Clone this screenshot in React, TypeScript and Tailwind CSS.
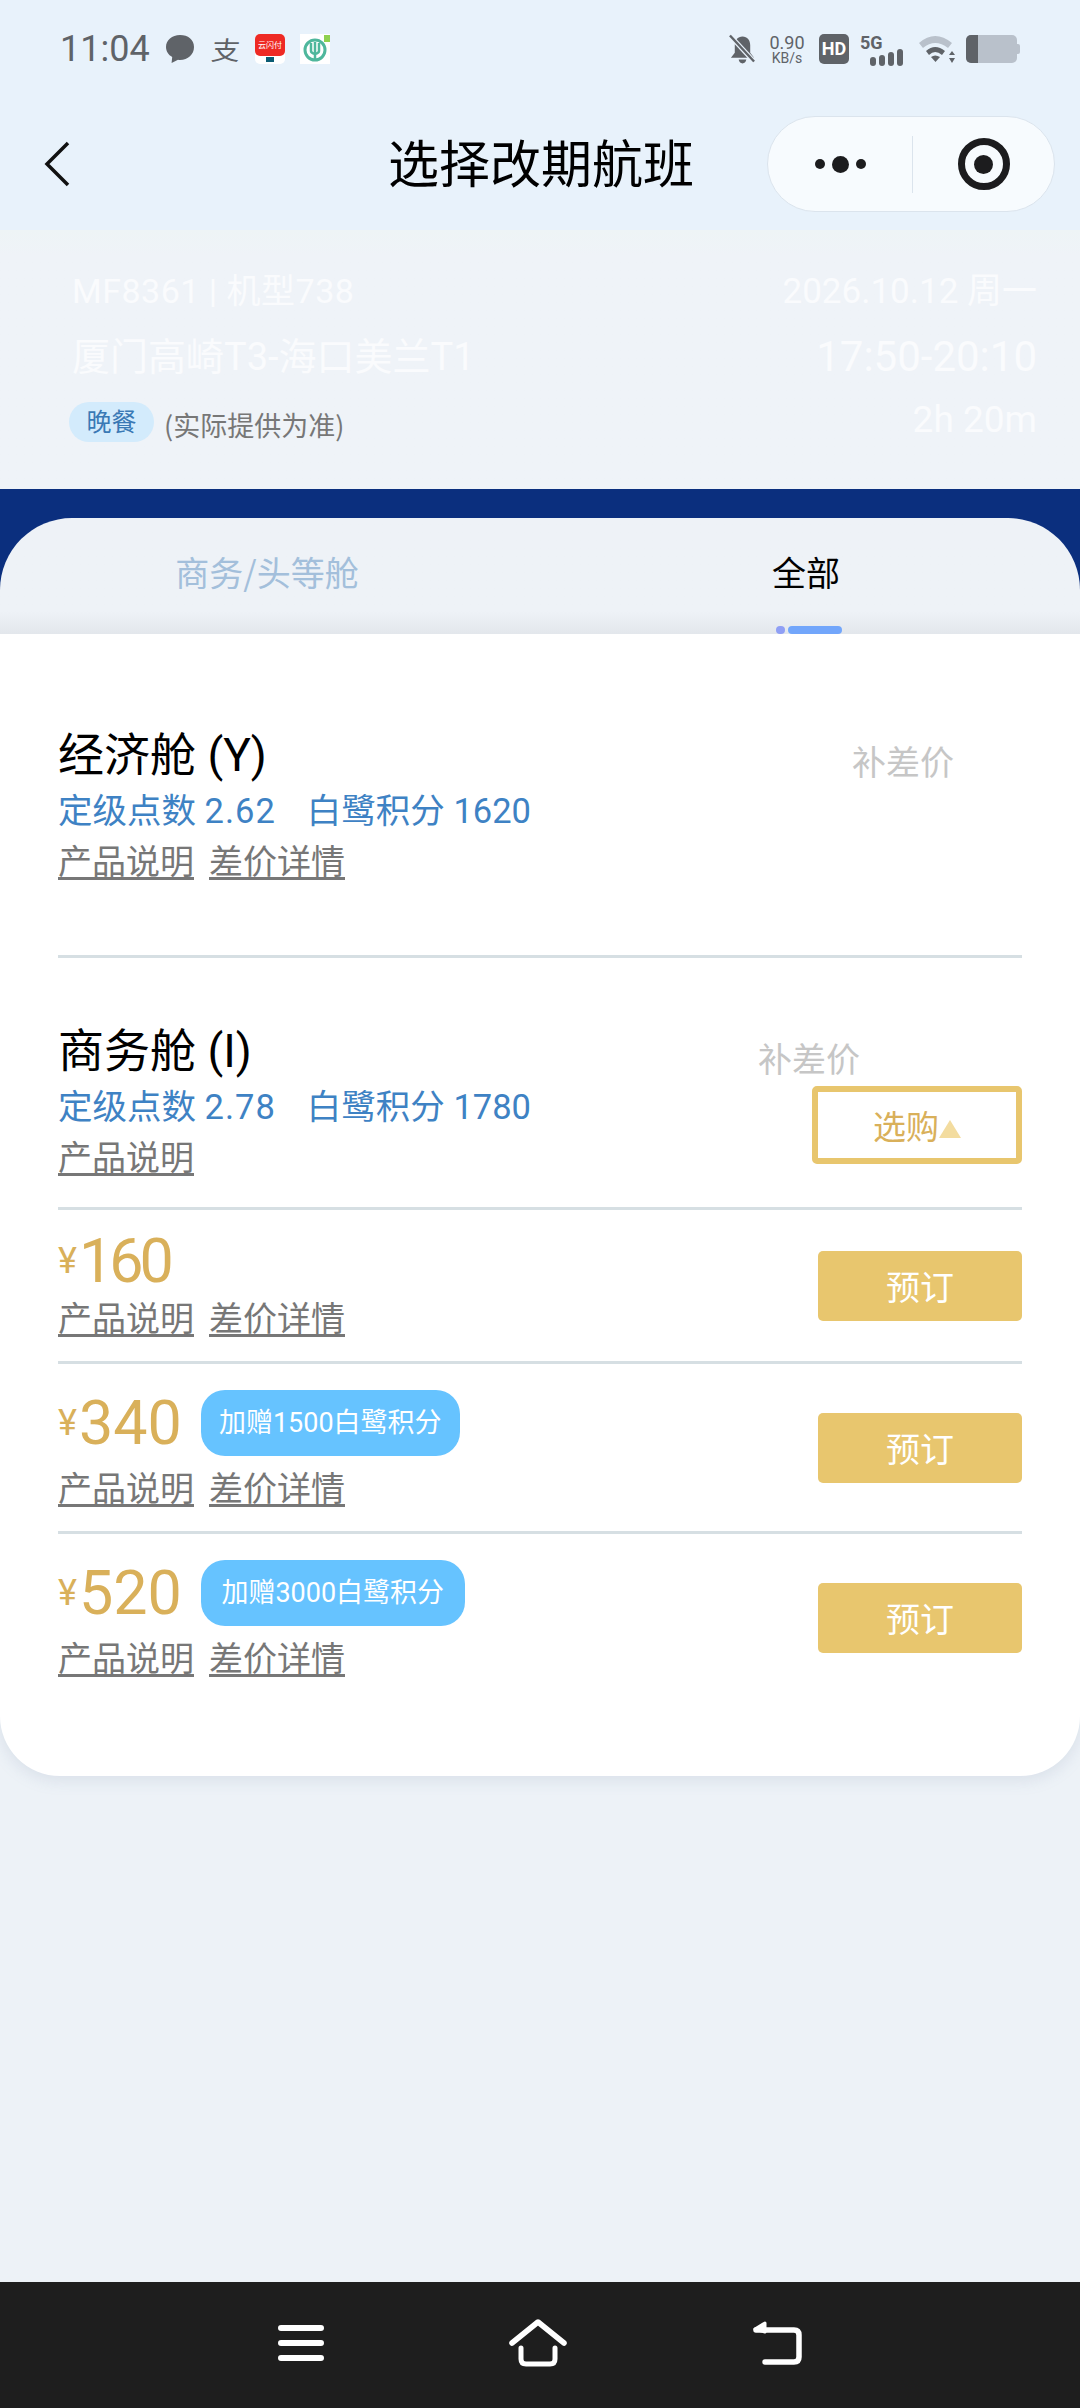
import React from "react";

const F = { fontFamily: '"Noto Sans CJK SC", sans-serif' };
const R = { fontFamily: 'Roboto, "Noto Sans CJK SC", sans-serif' };

function StatusLeft() {
  return (
    <div className="flex items-center">
      <span className="text-[36px] leading-none text-[#5f6368] w-[100px] ml-[60px]" style={R}>11:04</span>
      <svg width="30" height="30" viewBox="0 0 30 30" className="ml-[5px]">
        <path d="M15 1C7 1 1 6.200 1 13c0 4.400 2.400 7.800 6.200 10l-.6 6 6.400-3.200c.7.1 1.300.2 2 .2 8 0 14-5.600 14-13S23 1 15 1z" fill="#5f6368" />
      </svg>
      <span className="w-[28px] ml-[17px] text-[26px] leading-none text-[#5f6368] text-center scale-x-110 -skew-x-6" style={F}>支</span>
      <div className="ml-[15px] w-[30px] h-[30px] rounded-[5px] bg-white flex flex-col items-center">
        <div className="w-full h-[22px] bg-[#ee2a24] rounded-[5px] flex items-center justify-center text-[8px] leading-none text-white" style={F}>云闪付</div>
        <div className="w-[8px] h-[5px] mt-[1px] bg-[#0b5c74]" />
      </div>
      <svg width="30" height="30" viewBox="0 0 30 30" className="ml-[15px]">
        <rect width="30" height="30" fill="#fff" />
        <circle cx="15" cy="16" r="10" fill="none" stroke="#4fb79c" strokeWidth="3" />
        <path d="M11 9v8q0 2 4 3q4-1 4-3V9M15 8v18" fill="none" stroke="#4fb79c" strokeWidth="2.500" />
        <rect x="24" y="1" width="6" height="7" fill="#8fd14f" />
      </svg>
    </div>
  );
}

function StatusRight() {
  return (
    <div className="flex items-center">
      <svg width="27" height="30" viewBox="0 0 28 30">
        <path d="M14 2c5 0 8 4 8 9v8l4 5H2l4-5v-8c0-5 3-9 8-9zM10 26h8q-1 4-4 4t-4-4z" fill="#5f6368" />
        <path d="M0 0L26 28" stroke="#e8f2fb" strokeWidth="5" />
        <path d="M1 1L26 28" stroke="#5f6368" strokeWidth="2.500" />
      </svg>
      <div className="w-[38px] ml-[12px] flex flex-col items-center text-[#5f6368]" style={R}>
        <span className="text-[18px] leading-[17px]">0.90</span>
        <span className="text-[14px] leading-[14px]">KB/s</span>
      </div>
      <div className="ml-[13px] w-[30px] h-[30px] rounded-[5px] bg-[#5f6368] flex items-center justify-center text-[18px] font-bold leading-none text-white" style={R}>HD</div>
      <svg width="45" height="36" viewBox="0 0 45 36" className="ml-[11px]">
        <text x="0" y="18" fontSize="18" fontWeight="700" fill="#5f6368" fontFamily="Roboto, sans-serif">5G</text>
        <rect x="10" y="26" width="6" height="9" rx="3" fill="#5f6368" />
        <rect x="19" y="24" width="6" height="11" rx="3" fill="#5f6368" />
        <rect x="28" y="21" width="6" height="14" rx="3" fill="#5f6368" />
        <rect x="37" y="18" width="6" height="17" rx="3" fill="#5f6368" />
      </svg>
      <svg width="38" height="30" viewBox="0 0 38 30" className="ml-[13px]">
        <path d="M1 9Q17 -5 34 9l-4 5Q17 4 5 14z" fill="#b9c1cb" />
        <path d="M8 17Q17 9 27 17l-3 4Q17 15 11 21z" fill="#5f6368" />
        <path d="M13 23q4-3 9 0l-4.500 5z" fill="#5f6368" />
        <path d="M34 17l3 4h-6zM34 29l3-5h-6z" fill="#5f6368" />
      </svg>
      <div className="ml-[10px] flex items-center">
        <div className="w-[51px] h-[28px] rounded-[5px] bg-[#b9c1cb] overflow-hidden">
          <div className="w-[12px] h-full bg-[#5f6368]" />
        </div>
        <div className="w-[3px] h-[10px] rounded-r-[2px] bg-[#b9c1cb]" />
      </div>
    </div>
  );
}

function Header() {
  return (
    <div className="h-[230px] bg-[#e8f2fb] shrink-0">
      <div className="h-[98px] flex items-center justify-between pr-[60px]">
        <StatusLeft />
        <StatusRight />
      </div>
      <div className="relative h-[132px] flex items-center justify-between pl-[44px] pr-[25px]">
        <svg width="26" height="46" viewBox="0 0 26 46" className="-mt-[1px]">
          <path d="M24 2L3 23l21 21" fill="none" stroke="#111" strokeWidth="3.500" />
        </svg>
        <div className="absolute left-[388px] top-[27px] text-[51px] leading-[72px] text-black" style={F}>选择改期航班</div>
        <div className="w-[288px] h-[96px] rounded-full bg-[#f7fbfe] border border-[#dbe4ed] flex items-center">
          <div className="w-[144px] flex items-center justify-center gap-[7px]">
            <span className="w-[10px] h-[10px] rounded-full bg-[#1c1c1e]" />
            <span className="w-[17px] h-[17px] rounded-full bg-[#1c1c1e]" />
            <span className="w-[10px] h-[10px] rounded-full bg-[#1c1c1e]" />
          </div>
          <div className="w-px h-[57px] bg-[#dbe4ed]" />
          <div className="flex-1 flex justify-center">
            <div className="w-[52px] h-[52px] rounded-full border-[7px] border-[#1c1c1e] flex items-center justify-center">
              <span className="w-[19px] h-[19px] rounded-full bg-[#1c1c1e]" />
            </div>
          </div>
        </div>
      </div>
    </div>
  );
}

function FlightInfo() {
  return (
    <div className="h-[259px] bg-gradient-to-b from-[#eef4f6] from-0% to-[#eff3f8] to-10% shrink-0 pl-[72px] pr-[43px] flex justify-between text-[#fafbfd]" style={R}>
      <div className="flex flex-col">
        <div className="h-[40px] mt-[41px] flex items-center text-[34px] tracking-[0.5px] leading-none">MF8361 | 机型738</div>
        <div className="h-[48px] mt-[22px] flex items-center text-[38px] leading-none">厦门高崎T3-海口美兰T1</div>
        <div className="flex items-start mt-[21px] -ml-[3px]">
          <span className="w-[85px] h-[40px] rounded-full bg-[#d3ebfc] flex items-center justify-center text-[25px] leading-none text-[#3a79b5] pb-[3px]" style={F}>晚餐</span>
          <span className="ml-[10px] mt-[6px] text-[27px] leading-[34px] text-[#777777]" style={F}>(实际提供为准)</span>
        </div>
      </div>
      <div className="flex flex-col items-end">
        <div className="h-[40px] mt-[41px] flex items-center text-[35px] leading-none">2026.10.12 周一</div>
        <div className="h-[48px] mt-[22px] flex items-center text-[42px] leading-none">17:50-20:10</div>
        <div className="h-[40px] mt-[18px] flex items-center text-[37px] leading-none">2h 20m</div>
      </div>
    </div>
  );
}

function Tabs() {
  return (
    <div className="h-[145px] bg-[#0b2f7e] pt-[29px] shrink-0">
      <div className="relative h-[116px] rounded-t-[72px] bg-gradient-to-b from-[#eef2f7] from-80% to-[#e3e7ec] grid grid-cols-2 text-[34px] leading-none" style={F}>
        <div className="flex justify-center pt-[37px] pr-[6px] text-[#a3bfdb]">商务/头等舱</div>
        <div className="flex justify-center pt-[37px] pr-[8px] text-black">全部</div>
        <div className="absolute left-[776px] bottom-0 flex items-center gap-[3px]">
          <span className="w-[9px] h-[8px] rounded-full bg-[#8f9ff5]" />
          <span className="w-[54px] h-[8px] rounded-full bg-[#72a6fb]" />
        </div>
      </div>
    </div>
  );
}

function Links({ diff = true }: { diff?: boolean }) {
  return (
    <div className="flex gap-[15px] text-[34px] leading-[42px] text-[#777777] h-[42px]" style={F}>
      <span className="underline decoration-[3px] underline-offset-[3px]">产品说明</span>
      {diff && <span className="underline decoration-[3px] underline-offset-[3px]">差价详情</span>}
    </div>
  );
}

function CabinHead({ title, pts, miles }: { title: string; pts: string; miles: string }) {
  return (
    <>
      <div className="h-[60px] flex items-center text-[46px] leading-none text-black" style={R}>{title}</div>
      <div className="h-[52px] flex items-center text-[34.5px] leading-none text-[#3e82c4] whitespace-pre" style={R}>
        <span>定级点数 </span>
        <span className="tracking-[1px]">{pts}</span>
        <span className="ml-[31px]">{`白鹭积分 ${miles}`}</span>
      </div>
    </>
  );
}

function Price({ amount, gift, top, gap, btnTop, giftW, h, tight }: { amount: string; gift?: string; top: number; gap: number; btnTop: number; giftW?: string; h: string; tight?: boolean }) {
  return (
    <div className={`border-t-[3px] border-[#d6dfe3] relative flex justify-between ${h}`}>
      <div className="flex flex-col" style={{ paddingTop: top }}>
        <div className="flex items-center h-[66px]">
          <span className="text-[36px] leading-none text-[#d9b05a] mr-[2px]" style={R}>¥</span>
          <span className={`text-[61px] leading-none text-[#d9b05a] ${tight ? "tracking-[-4px]" : ""}`} style={R}>{amount}</span>
          {gift && (
            <span className={`ml-[19px] h-[66px] rounded-[24px] bg-[#66c3ff] flex items-center justify-center text-[27px] leading-none text-white ${giftW}`} style={R}>{gift}</span>
          )}
        </div>
        <div style={{ marginTop: gap }}><Links /></div>
      </div>
      <div className="w-[204px] h-[70px] rounded-[5px] bg-[#e8c66e] flex items-center justify-center text-[34px] leading-none text-white" style={{ ...F, marginTop: btnTop }}>预订</div>
    </div>
  );
}

function Card() {
  return (
    <div className="h-[1142px] bg-white rounded-b-[60px] shadow-[0_4px_16px_rgba(120,140,170,0.18)] px-[58px] shrink-0">
      <div className="h-[324px] relative pt-[91px] border-b-[3px] border-[#d6dfe3]">
        <CabinHead title="经济舱 (Y)" pts="2.62" miles="1620" />
        <div className="mt-[2px]"><Links /></div>
        <div className="absolute left-[794px] top-[105px] text-[34px] leading-[44px] text-[#c6c6c6]" style={F}>补差价</div>
      </div>
      <div className="h-[249px] relative pt-[63px]">
        <CabinHead title="商务舱 (I)" pts="2.78" miles="1780" />
        <div className="mt-[2px]"><Links diff={false} /></div>
        <div className="absolute left-[700px] top-[78px] text-[34px] leading-[44px] text-[#c6c6c6]" style={F}>补差价</div>
        <div className="absolute right-0 top-[128px] w-[210px] h-[78px] rounded-[5px] border-[6px] border-[#e8c66e] flex items-center justify-center text-[33px] leading-none text-[#d9b05a]" style={F}>
          选购
          <svg width="22" height="18" viewBox="0 0 22 18" className="mt-[8px]"><path d="M11 0l11 18H0z" fill="#f3dc9f" /></svg>
        </div>
      </div>
      <Price h="h-[154px]" tight amount="160" top={18} gap={2} btnTop={41} />
      <Price h="h-[170px]" amount="340" gift="加赠1500白鹭积分" giftW="w-[259px]" top={26} gap={10} btnTop={49} />
      <Price h="h-[170px]" amount="520" gift="加赠3000白鹭积分" giftW="w-[264px]" top={26} gap={10} btnTop={49} />
    </div>
  );
}

function BottomNav() {
  return (
    <div className="h-[126px] bg-[#1e1e1e] shrink-0 relative flex items-center justify-center gap-[185px] pb-[4px]">
      <svg width="46" height="38" viewBox="0 0 46 38">
        <path d="M3 4h40M3 19h40M3 34h40" stroke="#fff" strokeWidth="6" strokeLinecap="round" />
      </svg>
      <svg width="58" height="48" viewBox="0 0 58 48">
        <path d="M3 24L29 3l26 21" fill="none" stroke="#fff" strokeWidth="5.500" strokeLinecap="round" strokeLinejoin="round" />
        <path d="M12 29v11q0 5 5 5h24q5 0 5-5V29" fill="none" stroke="#fff" strokeWidth="5" strokeLinecap="round" />
      </svg>
      <svg width="50" height="44" viewBox="0 0 50 44">
        <path d="M4 9h38q5 0 5 5v22q0 5-5 5H13" fill="none" stroke="#fff" strokeWidth="5.500" strokeLinecap="round" />
        <path d="M13 2L3 8l10 3z" fill="#fff" stroke="#fff" strokeWidth="3" strokeLinejoin="round" />
      </svg>
    </div>
  );
}

export default function App() {
  return (
    <div className="w-[1080px] h-[2408px] flex flex-col bg-[#edf2f7] overflow-hidden">
      <Header />
      <FlightInfo />
      <Tabs />
      <Card />
      <div className="flex-1" />
      <BottomNav />
    </div>
  );
}
